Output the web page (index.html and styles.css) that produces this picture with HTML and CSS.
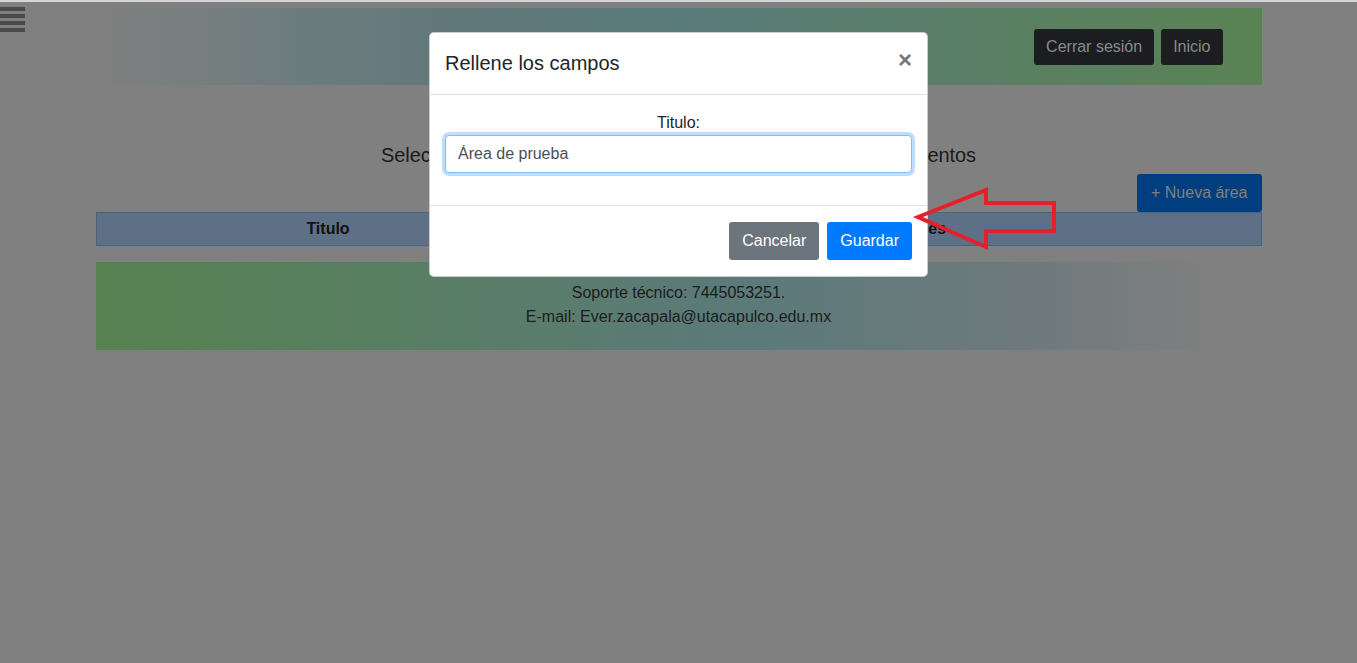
FILE: index.html
```html
<!DOCTYPE html>
<html lang="es">
<head>
<meta charset="utf-8">
<title>Áreas</title>
<link rel="stylesheet" href="styles.css">
</head>
<body>
<div class="topline"></div>
<button class="menu-toggle" aria-label="Menú">
  <span></span><span></span><span></span><span></span>
</button>
<div class="container">
  <header class="site-header">
    <button class="btn btn-dark">Cerrar sesión</button>
    <button class="btn btn-dark">Inicio</button>
  </header>
  <h4 class="page-title">Seleccione un área para poder consultar la lista de sus documentos</h4>
  <div class="actions">
    <button class="btn btn-primary">+ Nueva área</button>
  </div>
  <table class="areas">
    <thead>
      <tr><th class="col-title">Titulo</th><th>Acciones</th></tr>
    </thead>
  </table>
  <footer class="site-footer">
    <p>Soporte técnico: 7445053251.</p>
    <p>E-mail: Ever.zacapala@utacapulco.edu.mx</p>
  </footer>
</div>

<div class="modal">
  <div class="modal-dialog">
    <div class="modal-header">
      <h5 class="modal-title">Rellene los campos</h5>
      <button class="close" aria-label="Cerrar">&times;</button>
    </div>
    <div class="modal-body">
      <div class="form-group">
        <label for="titulo">Titulo:</label>
        <input id="titulo" class="form-control" type="text" value="Área de prueba">
      </div>
    </div>
    <div class="modal-footer">
      <button class="btn btn-secondary">Cancelar</button>
      <button class="btn btn-primary-lit">Guardar</button>
    </div>
  </div>
</div>

<svg class="arrow" width="150" height="70" viewBox="910 185 150 70">
  <polygon points="918,217 986,190 986,203 1054,203 1054,231 986,231 986,247" fill="none" stroke="#e5202a" stroke-width="4" stroke-linejoin="miter"/>
</svg>
</body>
</html>
```

FILE: styles.css
```css
* { box-sizing: border-box; }

html, body {
  margin: 0;
  padding: 0;
}

body {
  background: #808080;
  font-family: "Liberation Sans", Arial, sans-serif;
  font-size: 16px;
  line-height: 24px;
  color: #1a1a1a;
  height: 663px;
  overflow: hidden;
  position: relative;
}

.topline {
  height: 2px;
  background: #d6d6d6;
}

.menu-toggle {
  position: absolute;
  left: 0;
  top: 7px;
  width: 25px;
  padding: 0;
  border: 0;
  background: none;
  display: flex;
  flex-direction: column;
  gap: 3px;
}

.menu-toggle span {
  display: block;
  height: 4px;
  background: #4a4a4a;
}

.container {
  width: 1166px;
  margin: 0 auto;
}

.site-header {
  margin-top: 6px;
  height: 77px;
  display: flex;
  justify-content: flex-end;
  align-items: center;
  gap: 7px;
  padding-right: 39px;
  background: linear-gradient(to right, #808080 0%, #6c7c7e 18%, #62787b 30%, #5a7b7c 50%, #5a7f66 75%, #5a8354 100%);
}

.btn {
  font-family: inherit;
  font-size: 16px;
  line-height: 24px;
  padding: 6px 12px;
  border: 1px solid transparent;
  border-radius: 3px;
  cursor: pointer;
}

.btn-dark {
  background: #1b1d20;
  color: #8a8a8a;
  padding: 5px 11px;
}

.page-title {
  margin: 55px 0 0;
  font-size: 20px;
  font-weight: 400;
  line-height: 30px;
  letter-spacing: -0.1px;
  text-align: center;
  color: #1a1a1a;
}

.actions {
  display: flex;
  justify-content: flex-end;
  margin-top: 4px;
}

.btn-primary {
  background: #003e80;
  color: #808080;
  height: 38px;
  padding: 6px 13px;
}

.areas {
  width: 100%;
  border-collapse: collapse;
}

.areas th {
  background: #5d7086;
  border: 1px solid #4b6280;
  padding: 4px 8px;
  font-weight: 700;
  color: #111;
  text-align: center;
  height: 33px;
}

.areas .col-title {
  width: 464px;
}

.site-footer {
  margin-top: 16px;
  height: 88px;
  padding-top: 19px;
  text-align: center;
  color: #1c1c1c;
  background: linear-gradient(to right, #578150 0%, #597e66 30%, #5b7a7a 55%, #6e797c 80%, #808080 96%);
}

.site-footer p {
  margin: 0;
}

.modal {
  position: absolute;
  inset: 0;
  display: flex;
  justify-content: center;
  align-items: flex-start;
  padding-top: 32px;
}

.modal-dialog {
  width: 499px;
  background: #fff;
  border: 1px solid rgba(0, 0, 0, 0.2);
  border-radius: 5px;
  color: #212529;
}

.modal-header {
  display: flex;
  justify-content: space-between;
  align-items: flex-start;
  padding: 15px 15px 16px 15px;
  border-bottom: 1px solid #dee2e6;
}

.modal-title {
  margin: 0;
  font-size: 20px;
  font-weight: 400;
  line-height: 30px;
}

.close {
  border: 0;
  background: none;
  padding: 0;
  margin: 0;
  font-family: inherit;
  font-size: 24px;
  font-weight: 700;
  line-height: 24px;
  color: #777;
  cursor: pointer;
}

.modal-body {
  padding: 16px 15px;
}

.form-group {
  margin-bottom: 16px;
  text-align: center;
}

.form-group label {
  display: block;
  line-height: 24px;
}

.form-control {
  display: block;
  width: 100%;
  height: 38px;
  padding: 6px 12px;
  font-family: inherit;
  font-size: 16px;
  color: #495057;
  background: #fff;
  border: 1px solid #80bdff;
  border-radius: 4px;
  box-shadow: 0 0 0 3px rgba(0, 123, 255, 0.25);
  outline: none;
}

.modal-footer {
  display: flex;
  justify-content: flex-end;
  gap: 8px;
  padding: 16px 15px 16px;
  border-top: 1px solid #dee2e6;
}

.btn-secondary {
  background: #6c757d;
  color: #fff;
  height: 38px;
  padding: 6px 12px;
}

.btn-primary-lit {
  background: #007bff;
  color: #fff;
  height: 38px;
  padding: 6px 12px;
}

.arrow {
  position: absolute;
  left: 910px;
  top: 185px;
}
```
